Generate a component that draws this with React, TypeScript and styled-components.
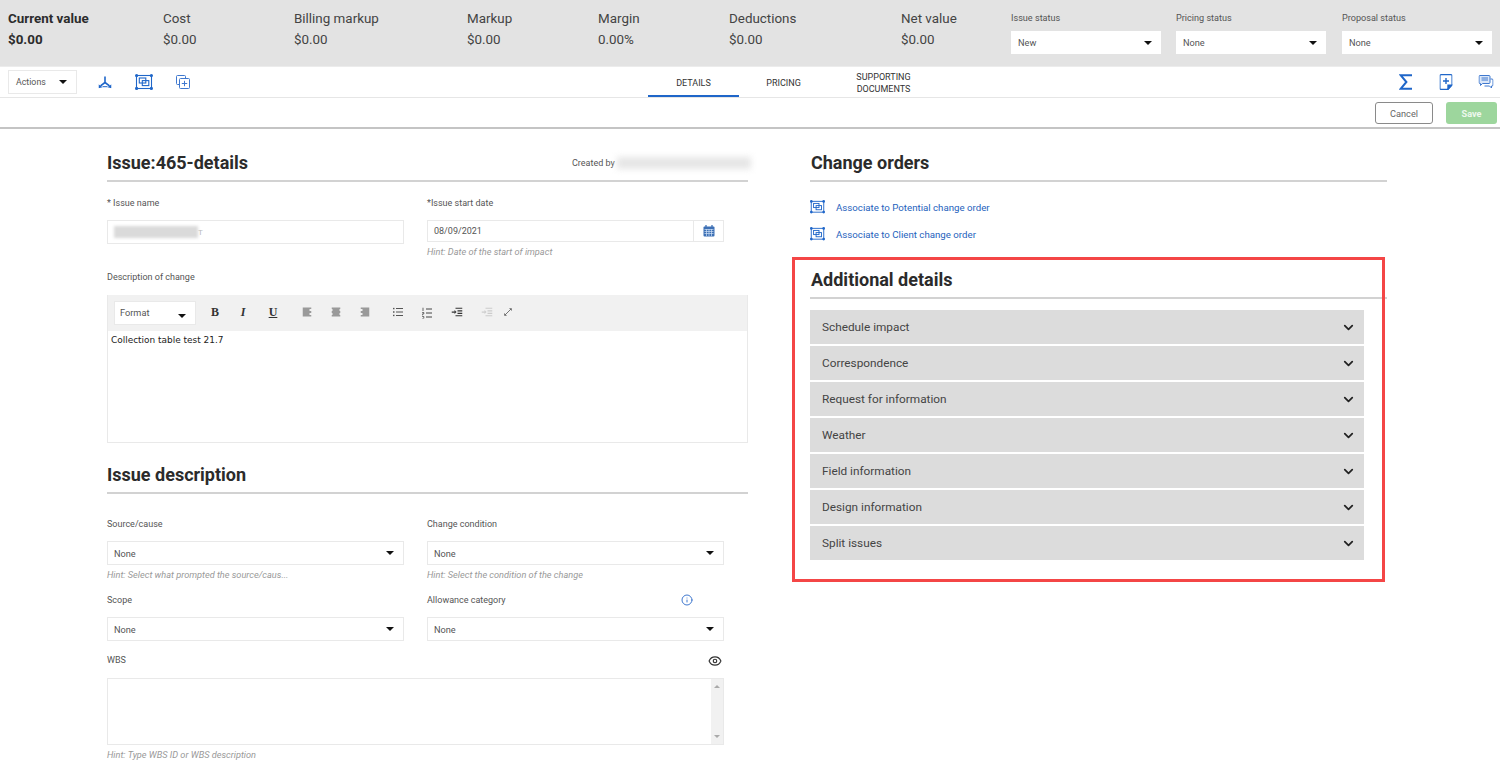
import React from "react";
import styled, { createGlobalStyle } from "styled-components";
import { ChevronDown, Eye, Info } from "lucide-react";

const GlobalStyle = createGlobalStyle`
  html, body {
    margin: 0;
    padding: 0;
    height: 769px;
    overflow: hidden;
    background: #fff;
    font-family: Roboto, "Liberation Sans", sans-serif;
    color: #333;
  }
  * { box-sizing: border-box; }
`;

const BLUE = "#1f66c9";

const SummaryBar = styled.div`
  position: relative;
  height: 67px;
  background: #e3e3e3;
  border-bottom: 1px solid #ececec;
`;

const Metric = styled.div<{ $x: number; $strong?: boolean }>`
  position: absolute;
  left: ${(p) => p.$x}px;
  top: 8px;
  font-size: 13.4px;
  line-height: 21px;
  color: #444;
  font-weight: ${(p) => (p.$strong ? 700 : 400)};
  ${(p) => p.$strong && "color: #2c2c2c;"}
`;

const StatusField = styled.div<{ $x: number }>`
  position: absolute;
  left: ${(p) => p.$x}px;
  top: 12px;
  width: 150px;
`;

const StatusLabel = styled.div`
  font-size: 9.1px;
  line-height: 12px;
  color: #555;
  margin-bottom: 7px;
`;

const Caret = styled.span`
  width: 0;
  height: 0;
  border-left: 4px solid transparent;
  border-right: 4px solid transparent;
  border-top: 4px solid #111;
`;

const SelectBox = styled.div<{ $width?: number; $height?: number; $plain?: boolean }>`
  display: flex;
  align-items: center;
  justify-content: space-between;
  width: ${(p) => (p.$width ? `${p.$width}px` : "100%")};
  height: ${(p) => p.$height ?? 24}px;
  padding: 0 9px 0 ${(p) => (p.$plain ? 7 : 6)}px;
  background: #fff;
  border: ${(p) => (p.$plain ? "none" : "1px solid #e9e9e9")};
  font-size: 9.2px;
  color: #555;
`;

const Toolbar = styled.div`
  position: relative;
  height: 31px;
  border-bottom: 1px solid #e6e6e6;
`;

const ActionsSelect = styled(SelectBox)`
  position: absolute;
  left: 8px;
  top: 3px;
  padding-left: 7px;
  font-size: 8.8px;
`;

const ToolIcon = styled.span<{ $x: number; $y?: number }>`
  position: absolute;
  left: ${(p) => p.$x}px;
  top: ${(p) => p.$y ?? 15}px;
  transform: translate(-50%, -50%);
  display: flex;
`;

const Tab = styled.div<{ $x: number; $width: number; $active?: boolean }>`
  position: absolute;
  left: ${(p) => p.$x}px;
  top: 0;
  width: ${(p) => p.$width}px;
  height: 30px;
  padding-top: 1px;
  display: flex;
  align-items: center;
  justify-content: center;
  text-align: center;
  font-size: 9px;
  line-height: 12px;
  color: #333;
  text-transform: uppercase;
  ${(p) => p.$active && `box-shadow: inset 0 -2px 0 ${BLUE};`}
`;

const ActionBar = styled.div`
  display: flex;
  justify-content: flex-end;
  align-items: flex-start;
  gap: 13px;
  height: 31px;
  padding: 4px 3px 0 0;
  border-bottom: 2px solid #c4c4c4;
`;

const CancelButton = styled.button`
  width: 58px;
  height: 22px;
  padding: 0;
  border: 1px solid #8a8a8a;
  border-radius: 3px;
  background: #fff;
  font: 9.2px Roboto, sans-serif;
  color: #666;
`;

const SaveButton = styled.button`
  width: 51px;
  height: 22px;
  padding: 0;
  border: none;
  border-radius: 3px;
  background: #9dd69d;
  font: 700 9.2px Roboto, sans-serif;
  color: #edf8ed;
`;

const Main = styled.div`
  position: relative;
  display: flex;
  padding: 20px 0 0 107px;
`;

const LeftColumn = styled.div`
  width: 641px;
  margin-right: 62px;
`;

const RightColumn = styled.div`
  position: relative;
  width: 577px;
  h2 { padding-left: 1px; }
`;

const SectionHead = styled.div<{ $top?: number }>`
  display: flex;
  justify-content: space-between;
  align-items: center;
  height: 33px;
  margin-top: ${(p) => p.$top ?? 0}px;
  padding-bottom: 4px;
  border-bottom: 2px solid #d2d2d2;
`;

const SectionTitle = styled.h2`
  margin: 0;
  font-size: 18px;
  line-height: 26px;
  font-weight: 700;
  color: #2b2b2b;
`;

const CreatedBy = styled.div`
  display: flex;
  align-items: center;
  font-size: 9px;
  color: #555;
  margin-right: -3px;
`;

const BlurredText = styled.span<{ $width: number; $height: number; $tone?: string; $blur?: number }>`
  display: inline-block;
  width: ${(p) => p.$width}px;
  height: ${(p) => p.$height}px;
  background: ${(p) => p.$tone ?? "#dadada"};
  filter: blur(${(p) => p.$blur ?? 1.5}px);
`;

const FormRow = styled.div<{ $height: number; $top?: number }>`
  display: grid;
  grid-template-columns: 297px 297px;
  column-gap: 23px;
  height: ${(p) => p.$height}px;
  margin-top: ${(p) => p.$top ?? 0}px;
`;

const FieldLabel = styled.div<{ $gap?: number }>`
  position: relative;
  height: 18px;
  margin-bottom: ${(p) => p.$gap ?? 8}px;
  font-size: 9px;
  line-height: 18px;
  color: #555;
`;

const TextInput = styled.div`
  display: flex;
  align-items: center;
  height: 24px;
  padding: 0 6px;
  border: 1px solid #e9e9e9;
  font-size: 9px;
  color: #555;
`;

const TrailingChar = styled.span`
  color: #bbb;
  font-size: 8px;
`;

const DateInput = styled(TextInput)`
  height: 22px;
  padding-right: 0;
  justify-content: space-between;
`;

const DateButton = styled.span`
  display: flex;
  align-items: center;
  justify-content: center;
  width: 30px;
  height: 100%;
  border-left: 1px solid #e9e9e9;
`;

const Hint = styled.div`
  margin-top: 4px;
  font-size: 9.2px;
  line-height: 12px;
  font-style: italic;
  color: #999;
`;

const Editor = styled.div`
  height: 148px;
  border: 1px solid #e9e9e9;
  border-top: none;
`;

const EditorTools = styled.div`
  position: relative;
  height: 36px;
  background: #f1f1f1;
`;

const FormatSelect = styled(SelectBox)`
  position: absolute;
  left: 6px;
  top: 6px;
  padding-left: 5px;
  padding-bottom: 2px;
  & > span:last-child { margin-top: 7px; }
`;

const FormatGlyph = styled.span<{ $x: number; $italic?: boolean; $underline?: boolean }>`
  position: absolute;
  left: ${(p) => p.$x}px;
  top: 10px;
  transform: translateX(-50%);
  font-family: "Liberation Serif", serif;
  font-size: 12px;
  line-height: 14px;
  font-weight: 700;
  color: #333;
  font-style: ${(p) => (p.$italic ? "italic" : "normal")};
  text-decoration: ${(p) => (p.$underline ? "underline" : "none")};
`;

const EditorBody = styled.div`
  padding: 3px 3px;
  font-family: "DejaVu Sans", sans-serif;
  font-size: 8.95px;
  line-height: 13px;
  color: #222;
`;

const LabelIcon = styled.span<{ $right: number }>`
  position: absolute;
  right: ${(p) => p.$right}px;
  top: 3px;
  display: flex;
`;

const WbsBox = styled.div`
  position: relative;
  width: 617px;
  height: 67px;
  border: 1px solid #e9e9e9;
`;

const WbsField = styled.div`
  width: 617px;
`;

const Scrollbar = styled.div`
  position: absolute;
  right: 0;
  top: 0;
  bottom: 0;
  width: 12px;
  background: #f1f1f1;
  display: flex;
  flex-direction: column;
  align-items: center;
  justify-content: space-between;
  padding: 6px 0;
`;

const ScrollArrow = styled.span<{ $up?: boolean }>`
  width: 0;
  height: 0;
  border-left: 3px solid transparent;
  border-right: 3px solid transparent;
  ${(p) => (p.$up ? "border-bottom: 3px solid #aaa;" : "border-top: 3px solid #aaa;")}
`;

const LinkList = styled.div`
  margin-top: 12px;
`;

const AssociateLink = styled.a`
  display: flex;
  align-items: center;
  gap: 11px;
  height: 27px;
  padding-bottom: 1px;
  font-size: 9.7px;
  color: #1e62bd;
`;

const Accordion = styled.div`
  display: flex;
  flex-direction: column;
  gap: 2px;
  width: 554px;
  margin-top: 11px;
`;

const AccordionRow = styled.div`
  display: flex;
  align-items: center;
  justify-content: space-between;
  height: 34px;
  padding: 0 8px 0 12px;
  background: #dcdcdc;
  font-size: 11.8px;
  color: #444;
`;

const Highlight = styled.div`
  position: absolute;
  left: -18px;
  top: 108px;
  width: 593px;
  height: 325px;
  border: 3px solid #f44646;
  pointer-events: none;
`;

const MergeIcon = () => (
  <svg width="13" height="13" viewBox="0 0 13 13" fill="none" stroke={BLUE} strokeWidth="1.6">
    <path d="M6.5 1v6L2 10.4M6.5 7l4.5 3.4" />
    <path d="M0 8.8l4 3-4 1zM13 8.8l-4 3 4 1z" fill={BLUE} stroke="none" />
    <path d="M4 11.2h5" strokeWidth="1" />
  </svg>
);

const AssociateIcon = ({ size = 18 }: { size?: number }) => (
  <svg width={size} height={size * 0.9} viewBox="0 0 18 16" fill="none" stroke={BLUE} strokeWidth="1.1">
    <rect x="1.5" y="1.5" width="15" height="13" />
    <rect x="4.3" y="4" width="6.5" height="5" />
    <rect x="7.3" y="6.6" width="6.5" height="5" />
    <g fill={BLUE} stroke="none">
      <circle cx="1.6" cy="1.6" r="1.6" />
      <circle cx="16.4" cy="1.6" r="1.6" />
      <circle cx="1.6" cy="14.4" r="1.6" />
      <circle cx="16.4" cy="14.4" r="1.6" />
    </g>
  </svg>
);

const CopyPlusIcon = () => (
  <svg width="14" height="14" viewBox="0 0 14 14" fill="none" stroke="#3f78cf" strokeWidth="1">
    <path d="M3.5 9.5H1.5a1 1 0 0 1-1-1V1.5a1 1 0 0 1 1-1h7a1 1 0 0 1 1 1v2" />
    <rect x="3.5" y="3.5" width="10" height="10" rx="1" />
    <path d="M8.5 5.8v5.4M5.8 8.5h5.4" />
  </svg>
);

const SigmaIcon = () => (
  <svg width="14" height="16" viewBox="0 0 14 16" fill="none" stroke={BLUE} strokeWidth="2">
    <path d="M13 1.2H1.6L7.4 8l-5.8 6.8H13" />
  </svg>
);

const NotePlusIcon = () => (
  <svg width="13" height="16" viewBox="0 0 13 16" fill="none" stroke={BLUE} strokeWidth="1.1">
    <path d="M1.5.6h10a1 1 0 0 1 1 1V11l-4 4.4h-7a1 1 0 0 1-1-1V1.6a1 1 0 0 1 1-1z" />
    <path d="M6.5 4v6M3.5 7h6" strokeWidth="1.4" />
    <path d="M8.4 15.4V11h4.1z" fill={BLUE} />
  </svg>
);

const CommentsIcon = () => (
  <svg width="15" height="14" viewBox="0 0 15 14" fill="none" stroke="#3f78cf" strokeWidth="1">
    <path d="M1.5.5h9a1 1 0 0 1 1 1v6a1 1 0 0 1-1 1H4L2 10.5V8.5h-.5a1 1 0 0 1-1-1v-6a1 1 0 0 1 1-1z" fill="#dbe7f8" />
    <path d="M3 3h6.5M3 5h6.5" />
    <path d="M12 4h1.5a1 1 0 0 1 1 1v5a1 1 0 0 1-1 1H13v2l-2-2H6" />
  </svg>
);

const CalendarIcon = () => (
  <svg width="12" height="12" viewBox="0 0 12 12">
    <rect x="0.5" y="1.5" width="11" height="10" rx="1" fill="#3d70b5" />
    <path d="M1.5 4.5h9M1.5 6.5h9M1.5 8.5h9M3.5 4v7M6 4v7M8.5 4v7" stroke="#cfe0f5" strokeWidth="0.7" />
    <path d="M3 0v2.5M9 0v2.5" stroke="#3d70b5" strokeWidth="1.3" />
  </svg>
);

const AlignIcon = ({ mode }: { mode: "left" | "center" | "right" }) => {
  const rows = [9, 7, 9, 7, 9];
  return (
    <svg width="9" height="9" viewBox="0 0 9 9" stroke="#444" strokeWidth="1.1">
      {rows.map((w, i) => {
        const x = mode === "left" ? 0 : mode === "right" ? 9 - w : (9 - w) / 2;
        return <path key={i} d={`M${x} ${i * 2 + 0.5}h${w}`} />;
      })}
    </svg>
  );
};

const BulletIcon = () => (
  <svg width="10" height="9" viewBox="0 0 10 9" stroke="#555" strokeWidth="1">
    <path d="M3 1h7M3 4.5h7M3 8h7" />
    <path d="M0 1h1.5M0 4.5h1.5M0 8h1.5" strokeWidth="1.3" />
  </svg>
);

const NumberedIcon = () => (
  <svg width="10" height="11" viewBox="0 0 10 11" stroke="#444" strokeWidth="1">
    <path d="M4 1.5h6M4 5.5h6M4 9.5h6" />
    <path d="M1 0v3.5M.2 5h1.6v1.5H.2V8M.2 9h1.6v2H.2" strokeWidth="0.8" fill="none" />
  </svg>
);

const IndentIcon = ({ faded }: { faded?: boolean }) => (
  <svg width="11" height="9" viewBox="0 0 11 9" stroke={faded ? "#ccc" : "#333"} strokeWidth="1.3">
    <path d="M4 .7h7M6 3.4h5M6 5.9h5M4 8.4h7" />
    <path d="M0 4.6h3.4" />
    <path d="M3 2.6l2 2-2 2z" fill={faded ? "#ccc" : "#333"} stroke="none" />
  </svg>
);

const ExpandIcon = () => (
  <svg width="9" height="9" viewBox="0 0 9 9" stroke="#666" strokeWidth="0.9" fill="#666">
    <path d="M1.5 7.5l6-6" />
    <path d="M5.5 .7h2.8v2.8zM.7 5.5v2.8h2.8z" stroke="none" />
  </svg>
);

const metrics = [
  { x: 8, label: "Current value", value: "$0.00", strong: true },
  { x: 163, label: "Cost", value: "$0.00" },
  { x: 294, label: "Billing markup", value: "$0.00" },
  { x: 467, label: "Markup", value: "$0.00" },
  { x: 598, label: "Margin", value: "0.00%" },
  { x: 729, label: "Deductions", value: "$0.00" },
  { x: 901, label: "Net value", value: "$0.00" },
];

const statuses = [
  { x: 1011, label: "Issue status", value: "New" },
  { x: 1176, label: "Pricing status", value: "None" },
  { x: 1342, label: "Proposal status", value: "None" },
];

const sections = [
  "Schedule impact",
  "Correspondence",
  "Request for information",
  "Weather",
  "Field information",
  "Design information",
  "Split issues",
];

export default function App() {
  return (
    <>
      <GlobalStyle />
      <SummaryBar>
        {metrics.map((m) => (
          <Metric key={m.label} $x={m.x} $strong={m.strong}>
            {m.label}
            <br />
            {m.value}
          </Metric>
        ))}
        {statuses.map((s) => (
          <StatusField key={s.label} $x={s.x}>
            <StatusLabel>{s.label}</StatusLabel>
            <SelectBox $plain $height={23}>
              {s.value}
              <Caret />
            </SelectBox>
          </StatusField>
        ))}
      </SummaryBar>

      <Toolbar>
        <ActionsSelect $width={69} $height={24}>
          Actions
          <Caret />
        </ActionsSelect>
        <ToolIcon $x={105}><MergeIcon /></ToolIcon>
        <ToolIcon $x={144}><AssociateIcon /></ToolIcon>
        <ToolIcon $x={183}><CopyPlusIcon /></ToolIcon>
        <Tab $x={648} $width={91} $active>Details</Tab>
        <Tab $x={739} $width={89}>Pricing</Tab>
        <Tab $x={828} $width={111}>Supporting<br />Documents</Tab>
        <ToolIcon $x={1406}><SigmaIcon /></ToolIcon>
        <ToolIcon $x={1446}><NotePlusIcon /></ToolIcon>
        <ToolIcon $x={1486}><CommentsIcon /></ToolIcon>
      </Toolbar>

      <ActionBar>
        <CancelButton>Cancel</CancelButton>
        <SaveButton>Save</SaveButton>
      </ActionBar>

      <Main>
        <LeftColumn>
          <SectionHead>
            <SectionTitle>Issue:465-details</SectionTitle>
            <CreatedBy>
              Created by&nbsp;
              <BlurredText $width={134} $height={12} $tone="#e6e6e6" $blur={3} />
            </CreatedBy>
          </SectionHead>

          <FormRow $height={74} $top={12}>
            <div>
              <FieldLabel>* Issue name</FieldLabel>
              <TextInput>
                <BlurredText $width={84} $height={12} />
                <TrailingChar>T</TrailingChar>
              </TextInput>
            </div>
            <div>
              <FieldLabel>*Issue start date</FieldLabel>
              <DateInput>
                08/09/2021
                <DateButton><CalendarIcon /></DateButton>
              </DateInput>
              <Hint>Hint: Date of the start of impact</Hint>
            </div>
          </FormRow>

          <FieldLabel $gap={9}>Description of change</FieldLabel>
          <Editor>
            <EditorTools>
              <FormatSelect $width={82} $height={24}>
                Format
                <Caret />
              </FormatSelect>
              <FormatGlyph $x={107}>B</FormatGlyph>
              <FormatGlyph $x={135} $italic>I</FormatGlyph>
              <FormatGlyph $x={165} $underline>U</FormatGlyph>
              <ToolIcon $x={199} $y={17}><AlignIcon mode="left" /></ToolIcon>
              <ToolIcon $x={228} $y={17}><AlignIcon mode="center" /></ToolIcon>
              <ToolIcon $x={257} $y={17}><AlignIcon mode="right" /></ToolIcon>
              <ToolIcon $x={290} $y={17}><BulletIcon /></ToolIcon>
              <ToolIcon $x={319} $y={18}><NumberedIcon /></ToolIcon>
              <ToolIcon $x={349} $y={17}><IndentIcon /></ToolIcon>
              <ToolIcon $x={379} $y={17}><IndentIcon faded /></ToolIcon>
              <ToolIcon $x={400} $y={17}><ExpandIcon /></ToolIcon>
            </EditorTools>
            <EditorBody>Collection table test 21.7</EditorBody>
          </Editor>

          <SectionHead $top={18}>
            <SectionTitle>Issue description</SectionTitle>
          </SectionHead>

          <FormRow $height={76} $top={21}>
            <div>
              <FieldLabel>Source/cause</FieldLabel>
              <SelectBox>None<Caret /></SelectBox>
              <Hint>Hint: Select what prompted the source/caus...</Hint>
            </div>
            <div>
              <FieldLabel>Change condition</FieldLabel>
              <SelectBox>None<Caret /></SelectBox>
              <Hint>Hint: Select the condition of the change</Hint>
            </div>
          </FormRow>

          <FormRow $height={60}>
            <div>
              <FieldLabel>Scope</FieldLabel>
              <SelectBox>None<Caret /></SelectBox>
            </div>
            <div>
              <FieldLabel>
                Allowance category
                <LabelIcon $right={31}>
                  <Info size={12} color="#3f78cf" />
                </LabelIcon>
              </FieldLabel>
              <SelectBox>None<Caret /></SelectBox>
            </div>
          </FormRow>

          <WbsField>
            <FieldLabel $gap={9}>
              WBS
              <LabelIcon $right={2}>
                <Eye size={14} color="#333" />
              </LabelIcon>
            </FieldLabel>
            <WbsBox>
              <Scrollbar>
                <ScrollArrow $up />
                <ScrollArrow />
              </Scrollbar>
            </WbsBox>
            <Hint>Hint: Type WBS ID or WBS description</Hint>
          </WbsField>
        </LeftColumn>

        <RightColumn>
          <SectionHead>
            <SectionTitle>Change orders</SectionTitle>
          </SectionHead>
          <LinkList>
            <AssociateLink><AssociateIcon size={15} />Associate to Potential change order</AssociateLink>
            <AssociateLink><AssociateIcon size={15} />Associate to Client change order</AssociateLink>
          </LinkList>
          <SectionHead $top={18}>
            <SectionTitle>Additional details</SectionTitle>
          </SectionHead>
          <Accordion>
            {sections.map((name) => (
              <AccordionRow key={name}>
                {name}
                <ChevronDown size={15} strokeWidth={2.8} color="#222" />
              </AccordionRow>
            ))}
          </Accordion>
          <Highlight />
        </RightColumn>
      </Main>
    </>
  );
}
